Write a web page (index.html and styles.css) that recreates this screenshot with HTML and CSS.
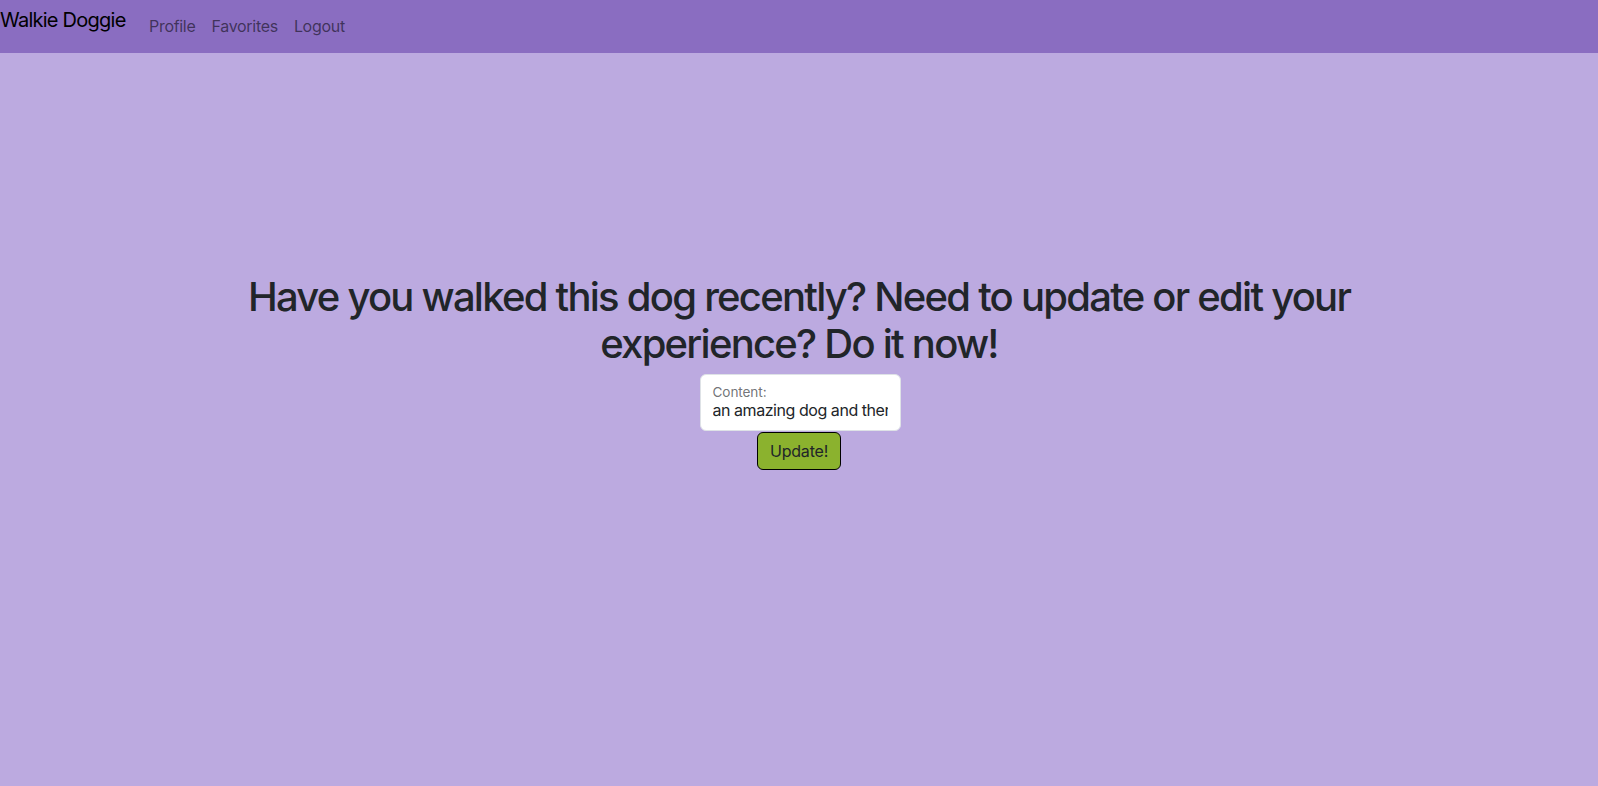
FILE: index.html
```html
<!DOCTYPE html>
<html lang="en">
<head>
<meta charset="utf-8">
<title>Walkie Doggie</title>
<link rel="stylesheet" href="styles.css">
</head>
<body>
<nav class="navbar">
  <a class="brand" href="#">Walkie Doggie</a>
  <ul class="nav-links">
    <li><a href="#">Profile</a></li>
    <li><a href="#">Favorites</a></li>
    <li><a href="#">Logout</a></li>
  </ul>
</nav>
<main class="page">
  <h1 class="title">Have you walked this dog recently? Need to update or edit your experience? Do it now!</h1>
  <form class="edit-form">
    <label class="field">
      <span class="field-label">Content:</span>
      <input class="field-input" type="text" value="an amazing dog and there is nothing more to say">
    </label>
    <button class="btn-update" type="button">Update!</button>
  </form>
</main>
</body>
</html>
```
FILE: styles.css
```css
* { box-sizing: border-box; }
html, body {
  margin: 0;
  padding: 0;
}
body {
  font-family: Inter, "Noto Sans", "Liberation Sans", sans-serif;
  background: #bcaae0;
  color: #212529;
  min-height: 786px;
}
.navbar {
  display: flex;
  align-items: flex-start;
  height: 53px;
  background: #8a6dc1;
}
.brand {
  font-size: 20px;
  line-height: 30px;
  padding-top: 5px;
  margin-right: 16px;
  color: #000;
  text-decoration: none;
  width: 125px;
  white-space: nowrap;
  letter-spacing: -0.75px;
}
.nav-links {
  display: flex;
  list-style: none;
  margin: 0;
  padding: 14px 0 0 0;
}
.nav-links a {
  display: block;
  font-size: 16px;
  line-height: 24px;
  padding: 0 8px;
  color: rgba(0, 0, 0, 0.55);
  text-decoration: none;
  letter-spacing: -0.3px;
}
.page {
  display: flex;
  flex-direction: column;
  align-items: center;
  padding-top: 220px;
}
.title {
  font-size: 40px;
  font-weight: 500;
  line-height: 47px;
  margin: 0 0 7px;
  max-width: 1296px;
  text-align: center;
  letter-spacing: -1.75px;
}
.edit-form {
  display: flex;
  flex-direction: column;
  align-items: center;
}
.field {
  display: flex;
  flex-direction: column;
  width: 201px;
  height: 57px;
  padding: 9px 12px 0;
  background: #fff;
  border: 1px solid #dee2e6;
  border-radius: 6px;
  position: relative;
  left: 1px;
}
.field-label {
  font-size: 13.6px;
  line-height: 16px;
  color: rgba(33, 37, 41, 0.65);
  letter-spacing: -0.1px;
}
.field-input {
  width: 100%;
  border: none;
  padding: 0;
  margin: 0;
  font-family: inherit;
  font-size: 16px;
  line-height: 20px;
  height: 20px;
  color: #212529;
  background: transparent;
  outline: none;
  letter-spacing: -0.45px;
}
.btn-update {
  margin-top: 1px;
  padding: 6px 12px;
  font-family: inherit;
  font-size: 16px;
  line-height: 24px;
  color: #212529;
  background: #8bb22e;
  border: 1px solid #000;
  border-radius: 6px;
  letter-spacing: -0.2px;
}
```
